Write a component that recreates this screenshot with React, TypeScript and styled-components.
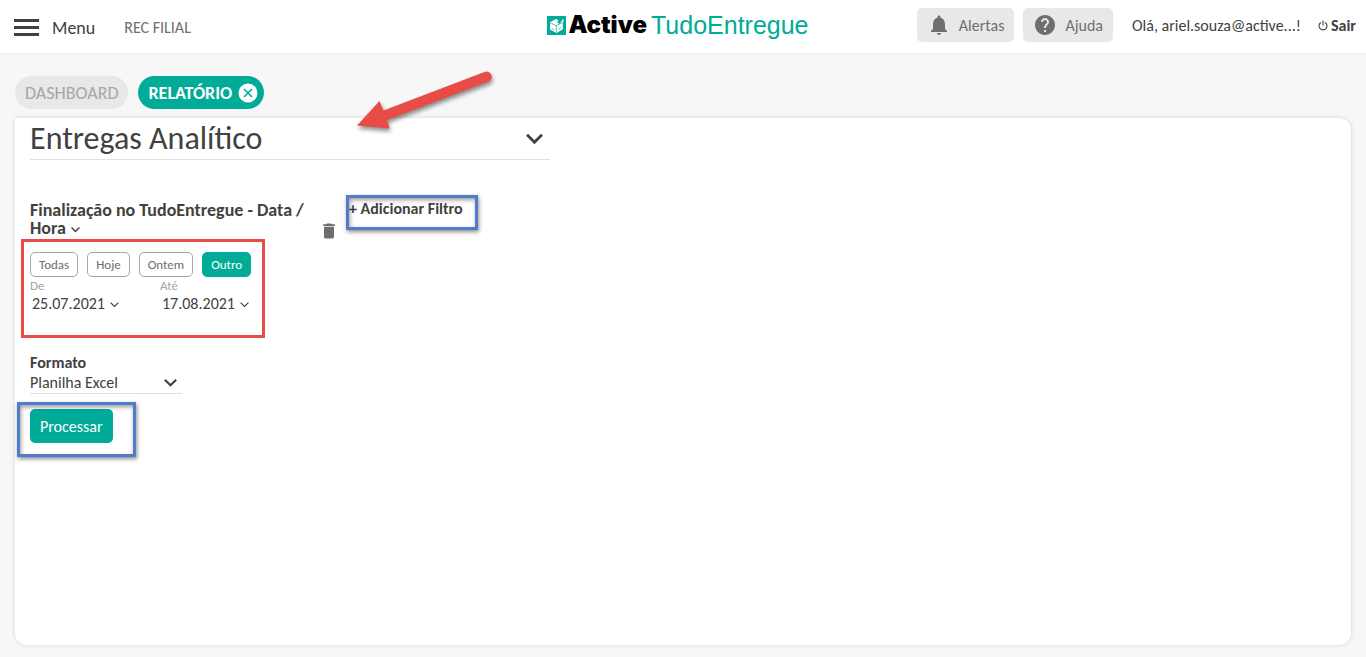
import React, { useState } from "react";
import styled, { createGlobalStyle } from "styled-components";
import { MdNotifications, MdHelp, MdDelete } from "react-icons/md";

const GlobalStyle = createGlobalStyle`
  *, *::before, *::after { box-sizing: border-box; }
  body {
    margin: 0;
    background: #f7f7f7;
    color: #414141;
    font-family: Carlito, Lato, "Open Sans", sans-serif;
    font-size: 16px;
  }
  button, select, input { font: inherit; color: inherit; }
  button { background: none; border: 0; padding: 0; cursor: pointer; }
`;

const Page = styled.div`
  display: flex;
  flex-direction: column;
  min-height: 100vh;
`;

const Header = styled.header`
  display: grid;
  grid-template-columns: 1fr auto 1fr;
  align-items: center;
  height: 53px;
  padding: 0 10px 0 14px;
  background: #fff;
  box-shadow: 0 1px 3px rgba(0, 0, 0, 0.05);
`;

const HeaderLeft = styled.div`
  display: flex;
  align-items: center;
  gap: 29px;
  padding-top: 2px;
`;

const MenuButton = styled.button`
  display: flex;
  align-items: center;
  gap: 13px;
  font-size: 18px;
`;

const Bars = styled.span`
  display: flex;
  flex-direction: column;
  gap: 4px;
  width: 25px;

  i { height: 3px; background: #414141; }
`;

const Branch = styled.span`
  color: #6e6e6e;
`;

const Logo = styled.a`
  display: flex;
  align-items: center;
  gap: 2px;
  margin-right: 14px;
  padding-bottom: 3px;
  color: #000;
  font: 900 24px/28px Inter, sans-serif;
  text-decoration: none;

  span {
    margin-left: 2px;
    color: #00ab97;
    font: 400 25px/28px "Liberation Sans", sans-serif;
  }
`;

const HeaderRight = styled.div`
  display: flex;
  align-items: center;
  justify-content: flex-end;
  padding-bottom: 3px;
`;

const HeaderButton = styled.button`
  display: flex;
  align-items: center;
  gap: 8px;
  height: 34px;
  margin-right: 9px;
  padding: 0 10px;
  border-radius: 5px;
  background: #e8e8e8;
  color: #6e6e6e;
  white-space: nowrap;
`;

const Greeting = styled.span`
  margin: 0 17px 0 10px;
  white-space: nowrap;
`;

const Logout = styled.a`
  display: flex;
  align-items: center;
  gap: 3px;
  color: inherit;
  font-weight: 700;
  text-decoration: none;
`;

const Main = styled.main`
  display: flex;
  flex: 1;
  flex-direction: column;
  padding: 23px 15px 12px;
`;

const Tabs = styled.nav`
  display: flex;
  gap: 10px;
  margin-bottom: 9px;
`;

const Tab = styled.button<{ $active?: boolean }>`
  display: flex;
  align-items: center;
  gap: 6px;
  height: 33px;
  padding: 0 ${(p) => (p.$active ? 6 : 10)}px 0 10px;
  border-radius: 17px;
  background: ${(p) => (p.$active ? "#00ab97" : "#e8e8e8")};
  color: ${(p) => (p.$active ? "#fff" : "#a6a6a6")};
  font-size: 18px;
  font-weight: ${(p) => (p.$active ? 700 : 400)};
`;

const Card = styled.section`
  flex: 1;
  padding: 0 15px 15px;
  border-radius: 0 12px 12px 12px;
  background: #fff;
  box-shadow: 0 0 5px rgba(0, 0, 0, 0.14);
`;

const SelectField = styled.div<{ $width: number; $inset: number }>`
  display: grid;
  align-items: center;
  width: ${(p) => p.$width}px;
  max-width: 100%;
  border-bottom: 1px solid #e2e2e2;

  select, svg { grid-area: 1 / 1; }
  select {
    width: 100%;
    padding: 0;
    border: 0;
    background: transparent;
    appearance: none;
    cursor: pointer;
  }
  svg {
    justify-self: end;
    margin-right: ${(p) => p.$inset}px;
    pointer-events: none;
  }
`;

const ReportField = styled(SelectField)`
  position: relative;
  height: 42px;
  font-size: 32px;
`;

const FilterRow = styled.div`
  display: flex;
  align-items: flex-start;
  margin-top: 41px;
`;

const Filter = styled.div`
  width: 289px;
`;

const FilterName = styled.button`
  display: block;
  width: 284px;
  font-size: 18px;
  font-weight: 700;
  line-height: 18px;
  text-align: left;

  svg { margin-left: 5px; }
`;

const DateFilter = styled.div`
  position: relative;
  margin-top: 15px;
`;

const Presets = styled.div`
  display: flex;
  gap: 9px;
`;

const Preset = styled.button<{ $active: boolean }>`
  height: 25px;
  padding: 0 8px;
  border: 1px solid ${(p) => (p.$active ? "#00ab97" : "#a6a6a6")};
  border-radius: 5px;
  background: ${(p) => (p.$active ? "#00ab97" : "#fff")};
  color: ${(p) => (p.$active ? "#fff" : "#6e6e6e")};
  font-size: 13px;
`;

const Dates = styled.div`
  display: flex;
  margin-top: 1px;
`;

const DateField = styled.label`
  width: 130px;
  color: #a6a6a6;
  font-size: 13px;
  line-height: 15px;
`;

const DateValue = styled.span`
  display: flex;
  align-items: center;
  gap: 5px;
  padding-left: 2px;
  color: #414141;

  input {
    width: 73px;
    height: 20px;
    padding: 0;
    border: 0;
    background: transparent;
    font-size: 16px;
  }
  svg { margin-top: 3px; }
`;

const RemoveButton = styled.button`
  display: flex;
  margin-top: 20px;
  color: #6e6e6e;
`;

const AddFilter = styled.button`
  position: relative;
  margin-left: 10px;
  font-weight: 700;
  line-height: 15px;
`;

const Format = styled.div`
  margin-top: 41px;

  label {
    display: block;
    font-weight: 700;
    line-height: 17px;
  }
`;

const FormatField = styled(SelectField)`
  height: 23px;
`;

const Submit = styled.button`
  position: relative;
  height: 34px;
  margin-top: 15px;
  padding: 0 10px;
  border-radius: 5px;
  background: #00ab97;
  color: #fff;
`;

const Highlight = styled.span<{ $color: "red" | "blue"; $inset: string }>`
  position: absolute;
  inset: ${(p) => p.$inset};
  border: 3px solid ${(p) => (p.$color === "red" ? "#e84c47" : "#4f7dcb")};
  ${(p) =>
    p.$color === "blue" &&
    "box-shadow: 1px 2px 4px rgba(0,0,0,.45), inset 1px 2px 4px rgba(0,0,0,.4);"}
  pointer-events: none;
`;

const Arrow = styled.svg`
  position: absolute;
  top: -53px;
  left: 320px;
  overflow: visible;
  filter: drop-shadow(1px 3px 2px rgba(0, 0, 0, 0.45));
  pointer-events: none;
`;

const Chevron = ({ size, weight }: { size: number; weight: number }) => (
  <svg width={size} height={size} viewBox="0 0 16 16" fill="none" stroke="currentColor" strokeWidth={weight} aria-hidden="true">
    <path d="M1 4.500 8 11.500 15 4.500" />
  </svg>
);

const presets = ["Todas", "Hoje", "Ontem", "Outro"];

export default function App() {
  const [preset, setPreset] = useState("Outro");

  return (
    <Page>
      <GlobalStyle />
      <Header>
        <HeaderLeft>
          <MenuButton>
            <Bars><i /><i /><i /></Bars>
            Menu
          </MenuButton>
          <Branch>REC FILIAL</Branch>
        </HeaderLeft>
        <Logo href="#">
          <svg width="19" height="19" viewBox="0 0 19 19" aria-hidden="true">
            <path fill="#00ab97" d="M0 0h19v19H0z" />
            <path fill="#fff" d="M3 6.200 9 3l2.400 1.200L10.400 6l1.800 1.700L15.700 3l1.300 1.200-1.200 2v7L9.500 17 3 13.600z" />
            <path fill="none" stroke="#00ab97" strokeWidth="0.7" d="m3.400 6.800 5.800 2.800 6-2.800M9.300 9.600v6.800M5.200 12.700l2 1M11.300 13.300l2.600-1.800M10.500 5.800l1.800 1.800 4-4.200" />
          </svg>
          Active <span>TudoEntregue</span>
        </Logo>
        <HeaderRight>
          <HeaderButton><MdNotifications size={24} />Alertas</HeaderButton>
          <HeaderButton><MdHelp size={24} />Ajuda</HeaderButton>
          <Greeting>Olá, ariel.souza@active...!</Greeting>
          <Logout href="#">
            <svg width="10" height="11" viewBox="0 0 10 11" fill="none" stroke="currentColor" strokeWidth="1.1" aria-hidden="true">
              <path d="M5 .5v5M3 2.400a4 4 0 1 0 4 0" />
            </svg>
            Sair
          </Logout>
        </HeaderRight>
      </Header>
      <Main>
        <Tabs>
          <Tab>DASHBOARD</Tab>
          <Tab $active>
            RELATÓRIO
            <svg width="20" height="20" viewBox="0 0 20 20" aria-hidden="true">
              <circle cx="10" cy="10" r="9.500" fill="#fff" />
              <path d="m6 6 8 8M14 6l-8 8" stroke="#00ab97" strokeWidth="1.6" />
            </svg>
          </Tab>
        </Tabs>
        <Card>
          <ReportField $width={520} $inset={7}>
            <select aria-label="Relatório">
              <option>Entregas Analítico</option>
            </select>
            <Chevron size={17} weight={2.6} />
            <Arrow width="150" height="70" viewBox="350 65 150 70" aria-hidden="true">
              <path fill="#e84c47" d="M357 125.500 379.500 101 383.500 110.500 484.500 72A5 5 0 0 1 488.500 81.500L387 120 389.500 128.500Z" />
            </Arrow>
          </ReportField>
          <FilterRow>
            <Filter>
              <FilterName>
                Finalização no TudoEntregue - Data / Hora
                <Chevron size={9} weight={2.6} />
              </FilterName>
              <DateFilter>
                <Presets>
                  {presets.map((name) => (
                    <Preset key={name} $active={name === preset} onClick={() => setPreset(name)}>
                      {name}
                    </Preset>
                  ))}
                </Presets>
                <Dates>
                  <DateField>
                    De
                    <DateValue><input defaultValue="25.07.2021" /><Chevron size={9} weight={2} /></DateValue>
                  </DateField>
                  <DateField>
                    Até
                    <DateValue><input defaultValue="17.08.2021" /><Chevron size={9} weight={2} /></DateValue>
                  </DateField>
                </Dates>
                <Highlight $color="red" $inset="-13px 54px -25px -9px" />
              </DateFilter>
            </Filter>
            <RemoveButton aria-label="Remover filtro"><MdDelete size={20} /></RemoveButton>
            <AddFilter>
              + Adicionar Filtro
              <Highlight $color="blue" $inset="-6px -15px -14px -3px" />
            </AddFilter>
          </FilterRow>
          <Format>
            <label htmlFor="format">Formato</label>
            <FormatField $width={152} $inset={5}>
              <select id="format">
                <option>Planilha Excel</option>
              </select>
              <Chevron size={13} weight={2.6} />
            </FormatField>
          </Format>
          <Submit>
            Processar
            <Highlight $color="blue" $inset="-7px -23px -14px -13px" />
          </Submit>
        </Card>
      </Main>
    </Page>
  );
}
